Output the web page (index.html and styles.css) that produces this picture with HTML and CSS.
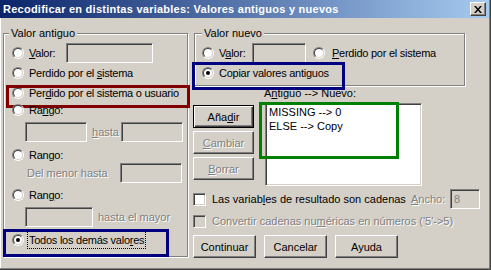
FILE: index.html
```html
<!DOCTYPE html>
<html>
<head>
<meta charset="utf-8">
<link rel="stylesheet" href="styles.css">
</head>
<body>
<div class="win">
  <div class="titlebar">
    <span class="title">Recodificar en distintas variables: Valores antiguos y nuevos</span>
    <span class="close"><svg width="8" height="7" viewBox="0 0 8 7"><path d="M0 0h2l2 2.4 2-2.4h2l-3 3.5 3 3.5h-2l-2-2.4-2 2.4h-2l3-3.5z" fill="#000"/></svg></span>
  </div>
  <div class="main">
    <div class="group old">
      <div class="legend">Valor antiguo</div>
      <div class="row h20 mt3 pl8"><span class="radio"></span><span class="lbl w37"><u>V</u>alor:</span><span class="edit w87"></span></div>
      <div class="row h20 pl8"><span class="radio"></span><span class="lbl">Perdido por el <u>s</u>istema</span></div>
      <div class="row h18 mt1 pl8 hl red"><span class="radio"></span><span class="lbl">Per<u>d</u>ido por el sistema o usuario</span></div>
      <div class="row h16 pl8"><span class="radio"></span><span class="lbl">Ra<u>n</u>go:</span></div>
      <div class="row h20 mt4 pl21"><span class="edit w62"></span><span class="lbl dis ml5 w29"><u>h</u>asta</span><span class="edit w62"></span></div>
      <div class="row h16 mt5 pl8"><span class="radio"></span><span class="lbl">Rango:</span></div>
      <div class="row h20 pl23"><span class="lbl dis w93">Del menor hasta</span><span class="edit w62"></span></div>
      <div class="row h16 mt4 pl8"><span class="radio"></span><span class="lbl">Ran<u>g</u>o:</span></div>
      <div class="row h20 mt4 pl21"><span class="edit w68"></span><span class="lbl dis ml5">hasta el mayor</span></div>
      <div class="row h22 mt2 pl8 hl blue1"><span class="radio on"></span><span class="lbl focus">Todos los demás valo<u>r</u>es</span></div>
    </div>
    <div class="right">
      <div class="group new">
        <div class="legend">Valor nuevo</div>
        <div class="row h20 mt3 pl7"><span class="radio"></span><span class="lbl w33">V<u>a</u>lor:</span><span class="edit w54"></span><span class="radio ml7"></span><span class="lbl ml7"><u>P</u>erdido por el sistema</span></div>
        <div class="row h20 pl7 hl blue2"><span class="radio on"></span><span class="lbl">Copiar valores anti<u>g</u>uos</span></div>
      </div>
      <div class="listlabel">A<u>n</u>tiguo --&gt; Nuevo:</div>
      <div class="mid">
        <div class="btncol">
          <span class="btn def">Aña<u>d</u>ir</span>
          <span class="btn dis"><u>C</u>ambiar</span>
          <span class="btn dis"><u>B</u>orrar</span>
        </div>
        <div class="listwrap">
          <div class="list">
            <div>MISSING --&gt; 0</div>
            <div>ELSE --&gt; Copy</div>
          </div>
          <span class="greenbox"></span>
        </div>
      </div>
      <div class="row h20 mt3 chkrow">
        <span class="chk"></span><span class="lbl w199">Las variab<u>l</u>es de resultado son cadenas</span><span class="lbl dis w39"><u>A</u>ncho:</span><span class="edit w30 val">8</span>
      </div>
      <div class="row h16 mt4 chkrow">
        <span class="chk off"></span><span class="lbl dis">Convertir cadenas nu<u>m</u>éricas en números ('5'-&gt;5)</span>
      </div>
      <div class="btnrow">
        <span class="btn">Continuar</span>
        <span class="btn">Cancelar</span>
        <span class="btn">Ayuda</span>
      </div>
    </div>
  </div>
</div>
</body>
</html>
```
FILE: styles.css
```css
* { box-sizing: border-box; }
html, body { margin: 0; padding: 0; }
body {
  width: 491px; height: 270px; overflow: hidden;
  background: #D4D0C8;
  font-family: "Liberation Sans", Arial, sans-serif;
  font-size: 11px; color: #000;
}
u { text-decoration: underline; text-underline-offset: 1px; }
.win {
  width: 491px; height: 270px; background: #D4D0C8;
  box-shadow: inset -1px -1px 0 #404040, inset -2px -2px 0 #808080, inset 1px 0 0 #fff;
}
.titlebar {
  height: 18px; margin-right: 2px;
  background: linear-gradient(to right, #0A246A, #A6CAF0);
  display: flex; align-items: center; justify-content: space-between;
  padding: 0 3px;
}
.title { color: #fff; font-weight: bold; font-size: 11px; letter-spacing: 0.25px; line-height: 18px; white-space: nowrap; }
.close {
  width: 16px; height: 14px; background: #D4D0C8;
  border: 1px solid; border-color: #fff #404040 #404040 #fff;
  box-shadow: inset -1px -1px 0 #808080;
  display: flex; align-items: center; justify-content: center;
}
.main { display: flex; padding-left: 3px; }
.group {
  border: 1px solid #808080;
  box-shadow: inset 1px 1px 0 #fff, 1px 1px 0 #fff;
  display: flex; flex-direction: column;
}
.old { margin-top: 15px; width: 185px; height: 224px; }
.right { margin-left: 5px; margin-top: 15px; width: 298px; display: flex; flex-direction: column; }
.new { margin-left: 1px; width: 271px; height: 53px; }
.legend {
  align-self: flex-start; margin: -8px 0 0 5px; padding: 0 2px;
  background: #D4D0C8; line-height: 14px; height: 14px; white-space: nowrap;
}
.new .legend { margin-left: 7px; }
.row { display: flex; align-items: center; position: relative; white-space: nowrap; }
.h16 { height: 16px; } .h18 { height: 18px; } .h20 { height: 20px; } .h22 { height: 22px; }
.mt1 { margin-top: 1px; } .mt2 { margin-top: 2px; } .mt3 { margin-top: 3px; }
.mt4 { margin-top: 4px; } .mt5 { margin-top: 5px; }
.pl7 { padding-left: 7px; } .pl8 { padding-left: 8px; } .pl21 { padding-left: 21px; } .pl23 { padding-left: 23px; }
.ml5 { margin-left: 5px; } .ml7 { margin-left: 7px; }
.lbl { line-height: 14px; }
.radio + .lbl { margin-left: 5px; letter-spacing: -0.25px; }
.radio + .lbl.ml7 { margin-left: 7px; }
.w29 { width: 29px; } .w30 { width: 30px; } .w33 { width: 33px; } .w37 { width: 37px; } .w39 { width: 39px; }
.w54 { width: 54px; } .w62 { width: 62px; } .w68 { width: 68px; } .w87 { width: 87px; } .w93 { width: 93px; } .w199 { width: 199px; }
.dis { color: #808080; text-shadow: 1px 1px 0 #fff; }
.radio {
  flex: none; width: 12px; height: 12px; border-radius: 50%;
  border: 1px solid; border-color: #808080 #fff #fff #808080;
  position: relative;
}
.radio::before {
  content: ""; position: absolute; inset: 0; border-radius: 50%;
  border: 1px solid; border-color: #404040 #D4D0C8 #D4D0C8 #404040; background: #fff;
}
.radio.on::after {
  content: ""; position: absolute; left: 3px; top: 3px; width: 4px; height: 4px;
  border-radius: 50%; background: #000;
}
.edit {
  flex: none; height: 20px; background: #D4D0C8;
  border: 1px solid; border-color: #808080 #fff #fff #808080;
  box-shadow: inset 1px 1px 0 #404040, inset -1px -1px 0 #D4D0C8;
}
.edit.val { color: #808080; padding: 2px 0 0 3px; line-height: 14px; }
.hl::after { content: ""; position: absolute; pointer-events: none; border: 3px solid; }
.red::after { border-color: #800000; left: 2px; top: 1px; width: 178px; height: 17px; }
.blue1::after { border-color: #000080; left: -1px; top: 0; width: 160px; height: 22px; }
.blue2::after { border-color: #000080; left: -3px; top: -1px; width: 147px; height: 22px; }
.focus { outline: 1px dotted #000; outline-offset: 0; padding: 1px 1px; margin-left: 4px !important; }
.listlabel { margin-left: 71px; line-height: 14px; height: 14px; }
.mid { display: flex; align-items: flex-start; }
.btncol { display: flex; flex-direction: column; gap: 3px; margin-top: 5px; width: 61px; }
.btn {
  display: flex; align-items: center; justify-content: center;
  height: 23px; background: #D4D0C8;
  border: 1px solid; border-color: #fff #404040 #404040 #fff;
  box-shadow: inset -1px -1px 0 #808080;
}
.btncol .btn { width: 61px; }
.btn.def {
  border: 1px solid #000;
  box-shadow: inset 1px 1px 0 #fff, inset -1px -1px 0 #404040, inset -2px -2px 0 #808080;
}
.listwrap { position: relative; margin-left: 11px; margin-top: 3px; }
.list {
  width: 157px; height: 83px; background: #fff;
  border: 1px solid; border-color: #808080 #fff #fff #808080;
  box-shadow: inset 1px 1px 0 #404040, inset -1px -1px 0 #D4D0C8;
  padding: 1px 0 0 3px; line-height: 14px;
}
.greenbox {
  position: absolute; left: -6px; top: -1px; width: 140px; height: 57px;
  border: 3px solid #008000; pointer-events: none;
}
.chk {
  flex: none; width: 13px; height: 13px; margin-right: 6px; background: #fff;
  border: 1px solid; border-color: #808080 #fff #fff #808080;
  box-shadow: inset 1px 1px 0 #404040, inset -1px -1px 0 #D4D0C8;
}
.chk.off { background: #D4D0C8; }
.btnrow { display: flex; gap: 8px; margin-top: 6px; }
.btnrow .btn { width: 63px; }
```
